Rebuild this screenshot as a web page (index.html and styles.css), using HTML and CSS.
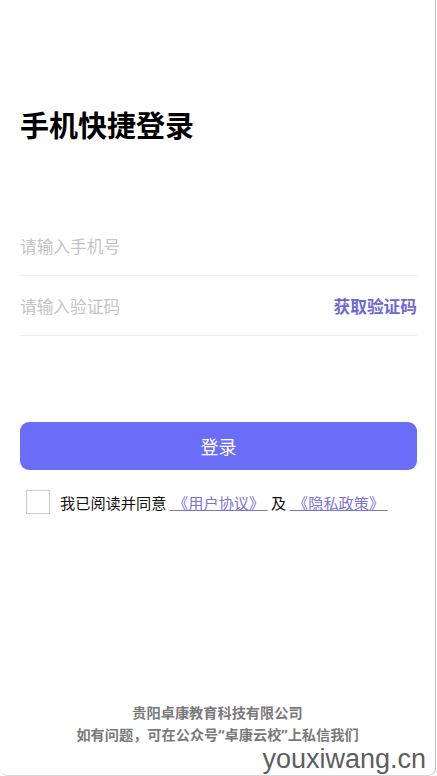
FILE: index.html
```html
<!DOCTYPE html>
<html lang="zh-CN">
<head>
    <meta charset="UTF-8">
    <meta name="viewport" content="width=device-width, initial-scale=1.0">
    <title>手机快捷登录</title>
    <link rel="stylesheet" href="styles.css">
</head>
<body>
    <div class="phone">
        <main class="login">
            <h1 class="title">手机快捷登录</h1>

            <div class="field">
                <input type="tel" class="field-input" placeholder="请输入手机号" aria-label="手机号">
            </div>
            <div class="field">
                <input type="text" class="field-input" placeholder="请输入验证码" aria-label="验证码">
                <button class="code-btn" type="button">获取验证码</button>
            </div>

            <button class="login-btn" type="button">登录</button>

            <label class="agree">
                <input type="checkbox" class="agree-box">
                <span class="agree-text">我已阅读并同意 <a href="#" class="agree-link">&nbsp;《用户协议》&nbsp;</a> 及 <a href="#" class="agree-link">&nbsp;《隐私政策》&nbsp;</a></span>
            </label>
        </main>

        <footer class="footer">
            <p>贵阳卓康教育科技有限公司</p>
            <p>如有问题，可在公众号“卓康云校”上私信我们</p>
        </footer>

        <div class="watermark">youxiwang.cn</div>
    </div>
</body>
</html>
```

FILE: styles.css
```css
:root {
    --primary: #6b6cf7;
    --link: #7c72d9;
    --line: #ececec;
    --placeholder: #c4c4c4;
    --footer-text: #7a7a7a;
}

* {
    box-sizing: border-box;
}

body {
    margin: 0;
    background: #ffffff;
    font-family: "Noto Sans CJK SC", "Noto Sans", sans-serif;
    color: #111;
}

.phone {
    position: relative; /* watermark overlay */
    width: 436px;
    height: 776px;
    border-right: 1px solid #bdbdbd;
    border-bottom: 1px solid #d6d6d6;
    border-radius: 0 0 8px 8px;
    display: flex;
    flex-direction: column;
    overflow: hidden;
}

.login {
    padding: 0 18px 0 20px;
    display: flex;
    flex-direction: column;
}

.title {
    margin: 104px 0 72px;
    font-size: 29px;
    line-height: 40px;
    font-weight: 700;
    color: #000;
}

.field {
    display: flex;
    align-items: center;
    height: 60px;
    border-bottom: 1px solid var(--line);
}

.field-input {
    flex: 1;
    min-width: 0;
    border: none;
    outline: none;
    padding: 0;
    font-family: inherit;
    font-size: 16.7px;
    color: #111;
    background: transparent;
}

.field-input::placeholder {
    color: var(--placeholder);
}

.code-btn {
    border: none;
    background: none;
    padding: 0;
    font-family: inherit;
    font-size: 16.7px;
    font-weight: 700;
    color: #6d68d6;
    cursor: pointer;
}

.login-btn {
    margin-top: 86px;
    height: 48px;
    border: none;
    border-radius: 9px;
    background-color: var(--primary);
    color: #fff;
    font-family: inherit;
    font-size: 18px;
    cursor: pointer;
}

.agree {
    display: flex;
    align-items: center;
    margin-top: 20px;
    padding-left: 6px;
    font-size: 15.2px;
    color: #111;
}

.agree-box {
    appearance: none;
    width: 24px;
    height: 24px;
    margin: 0 10px 0 0;
    border: 1px solid #c9c9c9;
    background: #fff;
}

.agree-link {
    color: var(--link);
    text-decoration: underline;
}

.footer {
    margin-top: auto;
    padding-bottom: 29px;
    text-align: center;
    font-family: "Noto Sans", "Noto Sans CJK SC", sans-serif;
    font-size: 14.2px;
    line-height: 22px;
    font-weight: 700;
    color: var(--footer-text);
}

.footer p {
    margin: 0;
}

.watermark {
    position: absolute;
    right: 9px;
    bottom: 0;
    font-family: "Liberation Sans", Arial, sans-serif;
    font-size: 27px;
    color: #5e5e5e;
}
```
